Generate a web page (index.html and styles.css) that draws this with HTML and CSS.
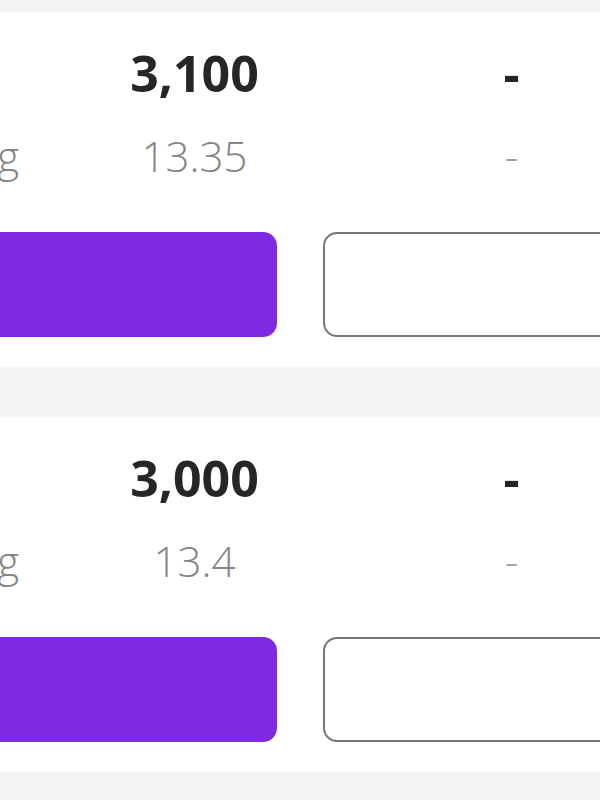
FILE: index.html
```html
<!DOCTYPE html>
<html lang="en">
  <head>
    <meta charset="UTF-8" />
    <meta name="viewport" content="width=device-width, initial-scale=1.0" />
    <title>Price levels</title>
    <link rel="stylesheet" href="styles.css">
  </head>
  <body>
    <div class="list">
      <section class="card">
        <div class="cols">
          <div class="label">
            <p class="big">&nbsp;</p>
            <p class="small">Avg</p>
          </div>
          <div class="cell">
            <p class="big">3,100</p>
            <p class="small">13.35</p>
          </div>
          <div class="cell">
            <p class="big">-</p>
            <p class="small dash">-</p>
          </div>
        </div>
        <div class="actions">
          <button class="btn btn-primary" type="button"></button>
          <button class="btn btn-outline" type="button"></button>
        </div>
      </section>

      <section class="card">
        <div class="cols">
          <div class="label">
            <p class="big">&nbsp;</p>
            <p class="small">Avg</p>
          </div>
          <div class="cell">
            <p class="big">3,000</p>
            <p class="small">13.4</p>
          </div>
          <div class="cell">
            <p class="big">-</p>
            <p class="small dash">-</p>
          </div>
        </div>
        <div class="actions">
          <button class="btn btn-primary" type="button"></button>
          <button class="btn btn-outline" type="button"></button>
        </div>
      </section>
    </div>
  </body>
</html>
```

FILE: styles.css
```css
html {
  font-family: "Open Sans", "Liberation Sans", sans-serif;
}

body {
  margin: 0;
  padding: 0;
  background: #f5f5f5;
  overflow: hidden;
  height: 800px;
}

.list {
  display: flex;
  flex-direction: column;
  gap: 50px;
  padding-top: 12px;
  border-top: 7px solid #fbfbfb;
  margin-top: -7px;
}

.card {
  background: #ffffff;
  height: 355px;
  box-sizing: border-box;
  padding-top: 36px;
  overflow: hidden;
}

/* three columns, the first one mostly cut off on the left */
.cols {
  display: grid;
  grid-template-columns: 300px 317px 317px;
  margin-left: -264px;
}

.cell {
  text-align: center;
}

.label {
  text-align: right;
  padding-right: 17px;
}

.cols p {
  margin: 0;
}

.big {
  font-size: 50px;
  line-height: 50px;
  font-weight: 700;
  color: #262626;
}

.small {
  margin-top: 37px !important;
  font-size: 42px;
  line-height: 42px;
  font-weight: 300;
  color: #858585;
}

.small.dash {
  color: #a0a0a0;
}

.actions {
  display: flex;
  gap: 46px;
  margin-top: 55px;
  margin-left: -143px;
}

.btn {
  flex: none;
  width: 420px;
  height: 105px;
  border-radius: 14px;
  padding: 0;
}

.btn-primary {
  background: #7f2ae0;
  border: none;
}

.btn-outline {
  background: #ffffff;
  border: 2.5px solid #777777;
}
```
